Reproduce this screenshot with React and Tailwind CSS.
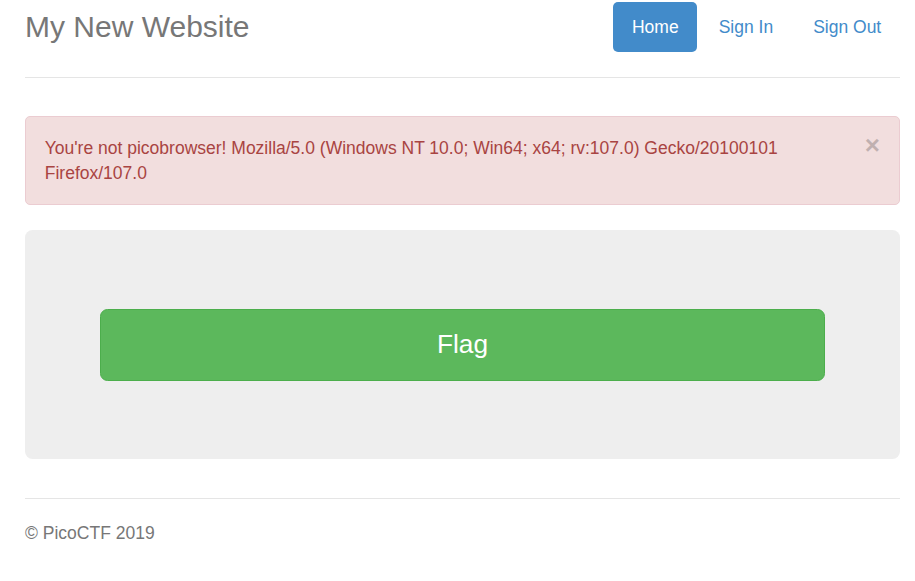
export default function App() {
  const linkClass =
    "block px-[18.75px] py-[12.5px] leading-[25px] rounded-[5px] text-[17.5px]";

  return (
    <div
      className="min-h-screen bg-white text-[17.5px] text-[#333]"
      style={{ fontFamily: '"Liberation Sans", Arial, sans-serif' }}
    >
      <div className="ml-[25px] w-[875px]">
        {/* Header */}
        <div className="flex items-center justify-between pt-[2px] pb-[25px] border-b border-[#e5e5e5]">
          <h3 className="text-[30px] leading-[50px] text-[#777]">
            My New Website
          </h3>
          <ul className="flex gap-[2.5px]">
            <li>
              <a className={`${linkClass} bg-[#428bca] text-white`}>Home</a>
            </li>
            <li>
              <a className={`${linkClass} text-[#428bca]`}>Sign In</a>
            </li>
            <li>
              <a className={`${linkClass} text-[#428bca]`}>Sign Out</a>
            </li>
          </ul>
        </div>

        {/* Alert */}
        <div className="relative mt-[38px] mb-[25px] rounded-[5px] border border-[#ebccd1] bg-[#f2dede] pl-[18.75px] pr-[43.75px] pt-[18.75px] pb-[17.75px] leading-[25px] text-[#a94442]">
          You're not picobrowser! Mozilla/5.0 (Windows NT 10.0; Win64; x64;
          rv:107.0) Gecko/20100101 Firefox/107.0
          <button className="absolute right-[19px] top-[15px] text-[26px] font-bold leading-[26px] text-black opacity-20">
            ×
          </button>
        </div>

        {/* Jumbotron */}
        <div className="rounded-[7.5px] bg-[#eeeeee] px-[75px] pt-[79px] pb-[78px] text-center">
          <button className="block w-full rounded-[7.5px] border border-[#4cae4c] bg-[#5cb85c] py-[17.5px] text-[26.25px] leading-[35px] text-white">
            Flag
          </button>
        </div>

        {/* Footer */}
        <div className="mt-[39px] border-t border-[#e5e5e5] pt-[22px] text-[#777]">
          <p className="leading-[25px]">© PicoCTF 2019</p>
        </div>
      </div>
    </div>
  );
}
